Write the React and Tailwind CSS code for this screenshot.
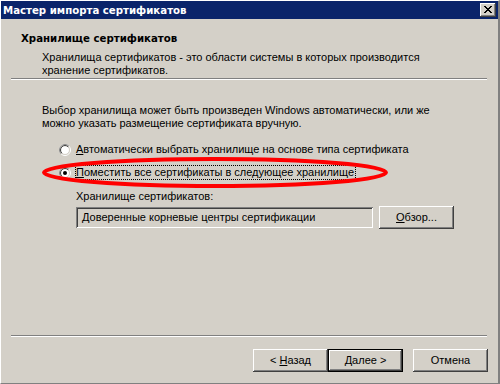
import React from "react";

const raised =
  "shadow-[inset_-1px_-1px_#404040,inset_1px_1px_#ffffff,inset_-2px_-2px_#808080,inset_2px_2px_#d4d0c8]";

function Radio({ checked }) {
  const a = (r) => {
    const k = r * 0.7071;
    return `M ${6 - k} ${6 + k} A ${r} ${r} 0 0 1 ${6 + k} ${6 - k}`;
  };
  return (
    <svg width="12" height="12" viewBox="0 0 12 12" className="shrink-0">
      <circle cx="6" cy="6" r="5.5" fill="none" stroke="#ffffff" />
      <path d={a(5.5)} fill="none" stroke="#808080" />
      <circle cx="6" cy="6" r="4.5" fill="#ffffff" stroke="#d4d0c8" />
      <path d={a(4.5)} fill="none" stroke="#404040" />
      {checked && <circle cx="6" cy="6" r="2" fill="#000000" />}
    </svg>
  );
}

function Button({ children, def }) {
  if (def) {
    return (
      <div className="w-[75px] h-[23px] border border-black">
        <div className={`w-full h-full flex items-center justify-center ${raised}`}>{children}</div>
      </div>
    );
  }
  return (
    <div className={`w-[75px] h-[23px] flex items-center justify-center ${raised}`}>{children}</div>
  );
}

export default function App() {
  return (
    <div className="w-[500px] h-[384px] bg-[#d4d0c8] relative overflow-hidden flex flex-col border-t border-l border-white border-r-2 border-b border-r-[#808080] border-b-[#808080] font-['Liberation_Sans',sans-serif] text-[11px] leading-[13px] text-black">
      {/* Title bar */}
      <div className="h-[18px] bg-[#0a246a] flex items-center justify-between pl-[2px] pr-[2px] shrink-0">
        <span className="text-white font-bold font-['DejaVu_Sans',sans-serif] text-[10.2px] leading-[13px]">Мастер импорта сертификатов</span>
        <div className={`w-[16px] h-[14px] bg-[#d4d0c8] flex items-center justify-center ${raised}`}>
          <svg width="16" height="14" viewBox="0 0 16 14" shapeRendering="crispEdges">
            <path d="M4 3h2v1h1v1h2V4h1V3h2v1h-1v1h-1v1h-1v1h1v1h1v1h1v1h-2V9h-1V8H7v1H6v1H4V9h1V8h1V7h1V6H6V5H5V4H4z" fill="#000000" />
          </svg>
        </div>
      </div>

      {/* Header */}
      <div className="h-[59px] shrink-0 pt-[13px] pl-[20px]">
        <div className="font-bold font-['DejaVu_Sans',sans-serif] text-[10.2px]">Хранилище сертификатов</div>
        <div className="pl-[21px] mt-[6px]">
          <div>Хранилища сертификатов - это области системы в которых производится</div>
          <div>хранение сертификатов.</div>
        </div>
      </div>
      <div className="ml-[10px] mr-[11px] h-[2px] border-t border-b border-t-[#808080] border-b-white shrink-0" />

      {/* Body */}
      <div className="pt-[24px] pl-[41px]">
        <div>Выбор хранилища может быть произведен Windows автоматически, или же</div>
        <div>можно указать размещение сертификата вручную.</div>
      </div>

      <div className="pl-[58px] mt-[12px] flex items-center gap-[4px] h-[15px]">
        <Radio />
        <span className="border border-transparent">
          <u>А</u>втоматически выбрать хранилище на основе типа сертификата
        </span>
      </div>
      <div className="pl-[58px] mt-[8px] flex items-center gap-[4px] h-[15px]">
        <Radio checked />
        <span className="border border-dotted border-black pr-[1px]">
          <u>П</u>оместить все сертификаты в следующее хранилище
        </span>
      </div>

      <div className="pl-[75px] mt-[10px]">Хранилище сертификатов:</div>
      <div className="pl-[75px] mt-[3px] flex items-center gap-[6px]">
        <div className="w-[297px] h-[21px] flex items-center pl-[6px] shadow-[inset_1px_1px_#808080,inset_-1px_-1px_#ffffff,inset_2px_2px_#404040,inset_-2px_-2px_#d4d0c8]">
          Доверенные корневые центры сертификации
        </div>
        <Button>
          <span><u>О</u>бзор...</span>
        </Button>
      </div>

      {/* Footer */}
      <div className="mt-auto shrink-0">
        <div className="ml-[10px] mr-[11px] h-[2px] border-t border-b border-t-[#808080] border-b-white" />
        <div className="flex justify-end pr-[10px] pt-[12px] pb-[11px]">
          <Button>
            <span>&lt; <u>Н</u>азад</span>
          </Button>
          <Button def>
            <span><u>Д</u>алее &gt;</span>
          </Button>
          <div className="w-[10px]" />
          <Button>
            <span>Отмена</span>
          </Button>
        </div>
      </div>

      {/* Red annotation ellipse */}
      <svg className="absolute left-[-1px] top-[-1px] pointer-events-none" width="500" height="384" viewBox="0 0 500 384">
        <ellipse cx="215" cy="172.5" rx="171" ry="13.5" fill="none" stroke="#ff0000" strokeWidth="4" />
      </svg>
    </div>
  );
}
